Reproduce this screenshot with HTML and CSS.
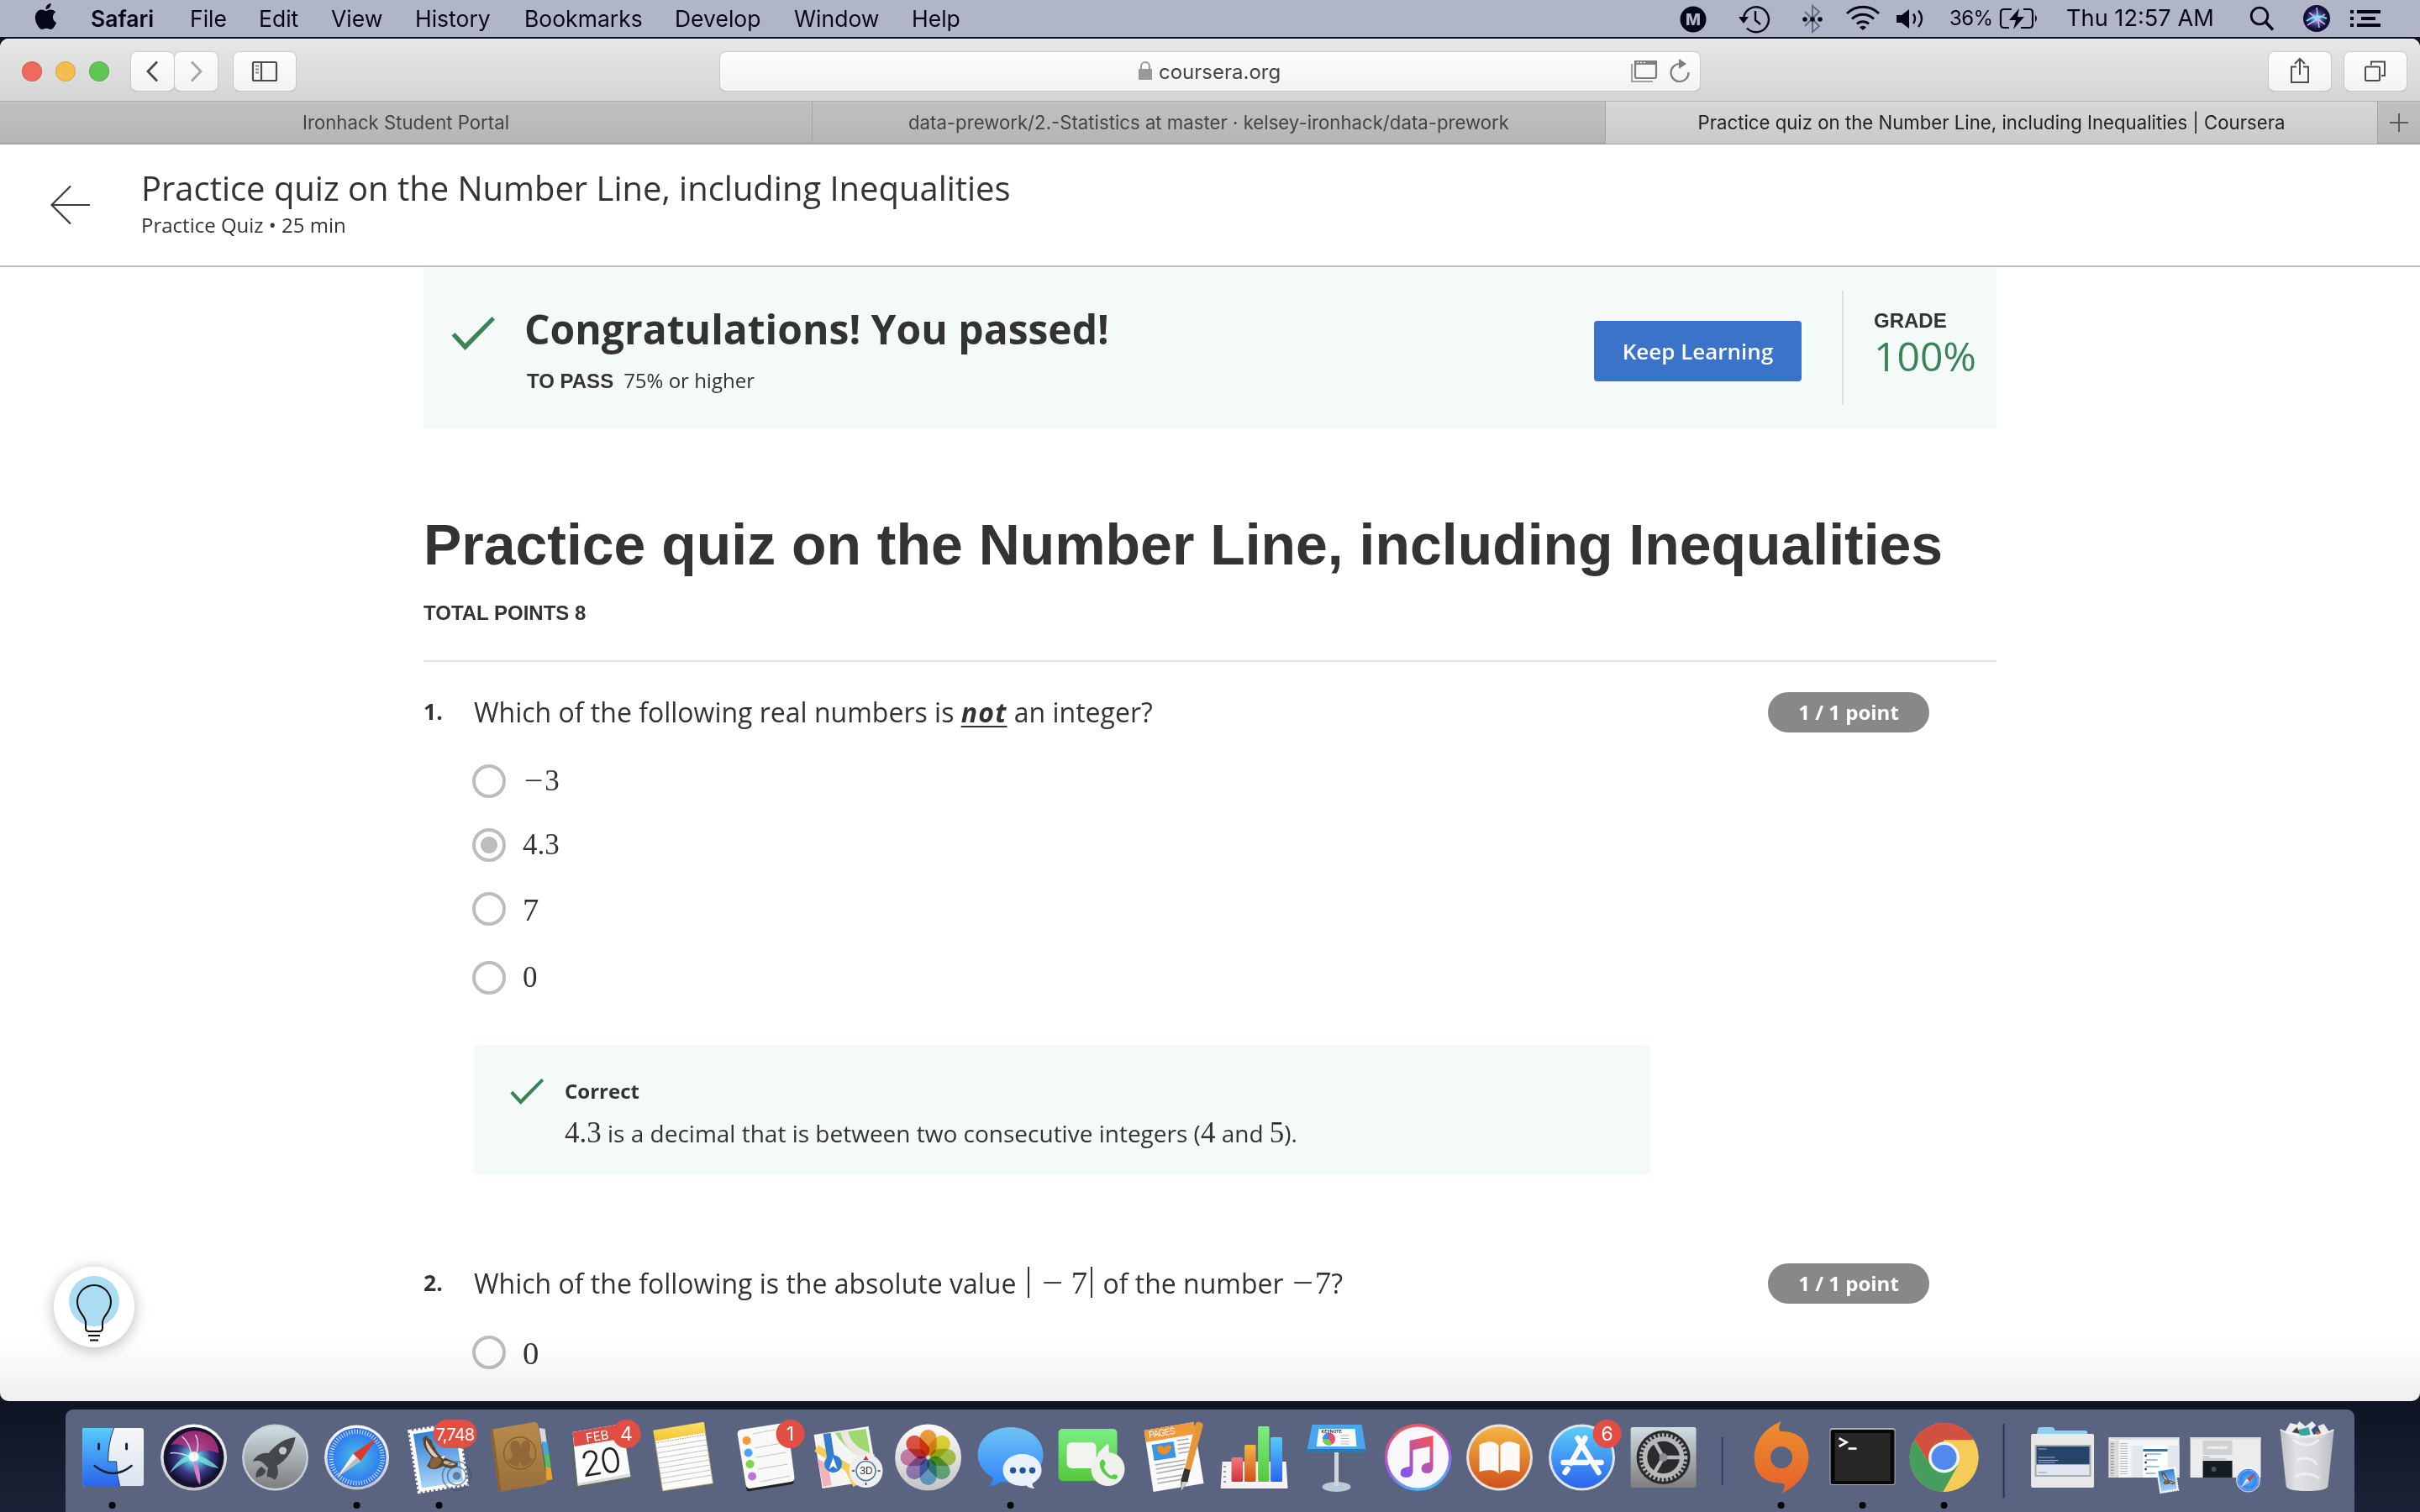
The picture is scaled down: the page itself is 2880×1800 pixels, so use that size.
FILE: index.html
```html
<!DOCTYPE html>
<html lang="en">
<head>
<meta charset="utf-8">
<title>Practice quiz on the Number Line, including Inequalities | Coursera</title>
<link rel="stylesheet" href="styles.css">
</head>
<body>
<svg class="defs" width="0" height="0" aria-hidden="true">
  <defs>
    <linearGradient id="gBlue" x1="0" y1="0" x2="0" y2="1"><stop offset="0" stop-color="#59ccfa"/><stop offset="1" stop-color="#2a63ec"/></linearGradient>
    <linearGradient id="gWhite" x1="0" y1="0" x2="0" y2="1"><stop offset="0" stop-color="#f7f7f8"/><stop offset="1" stop-color="#dbe4ef"/></linearGradient>
    <radialGradient id="gSiri"><stop offset="0" stop-color="#e8ffff"/><stop offset=".25" stop-color="#59b9d8"/><stop offset=".6" stop-color="#3a3b86"/><stop offset="1" stop-color="#120d2c"/></radialGradient>
    <linearGradient id="gRing" x1="0" y1="0" x2="0" y2="1"><stop offset="0" stop-color="#fdfdfd"/><stop offset="1" stop-color="#c3c3c6"/></linearGradient>
    <linearGradient id="gPad" x1="0" y1="0" x2="0" y2="1"><stop offset="0" stop-color="#cfdde3"/><stop offset="1" stop-color="#7e7e7e"/></linearGradient>
    <radialGradient id="gSafari"><stop offset="0" stop-color="#4cbfe4"/><stop offset="1" stop-color="#2a6ff0"/></radialGradient>
    <linearGradient id="gSky" x1="0" y1="0" x2="0" y2="1"><stop offset="0" stop-color="#3380d6"/><stop offset="1" stop-color="#a9d3f5"/></linearGradient>
    <linearGradient id="gBrown" x1="0" y1="0" x2="0" y2="1"><stop offset="0" stop-color="#b98a4c"/><stop offset="1" stop-color="#98703c"/></linearGradient>
    <linearGradient id="gYellow" x1="0" y1="0" x2="0" y2="1"><stop offset="0" stop-color="#fbe06b"/><stop offset="1" stop-color="#f2c32e"/></linearGradient>
    <linearGradient id="gMsg" x1="0" y1="0" x2="0" y2="1"><stop offset="0" stop-color="#6fc3f6"/><stop offset="1" stop-color="#2f83fa"/></linearGradient>
    <linearGradient id="gGreen" x1="0" y1="0" x2="0" y2="1"><stop offset="0" stop-color="#7bee83"/><stop offset="1" stop-color="#56c83c"/></linearGradient>
    <linearGradient id="gOrange" x1="0" y1="0" x2="0" y2="1"><stop offset="0" stop-color="#f4b741"/><stop offset="1" stop-color="#d0501d"/></linearGradient>
    <linearGradient id="gRed" x1="0" y1="0" x2="0" y2="1"><stop offset="0" stop-color="#f07a7c"/><stop offset="1" stop-color="#cf3340"/></linearGradient>
    <linearGradient id="gTunes" x1=".3" y1="0" x2=".6" y2="1"><stop offset="0" stop-color="#f8594f"/><stop offset=".55" stop-color="#a950ee"/><stop offset="1" stop-color="#45bdf8"/></linearGradient>
    <linearGradient id="gNote" x1=".8" y1="0" x2=".2" y2="1"><stop offset="0" stop-color="#f0545e"/><stop offset="1" stop-color="#8355f2"/></linearGradient>
    <linearGradient id="gOrigin" x1="0" y1="0" x2="0" y2="1"><stop offset="0" stop-color="#ee8f2f"/><stop offset="1" stop-color="#e5602a"/></linearGradient>
    <linearGradient id="gTrash" x1="0" y1="0" x2="1" y2="0"><stop offset="0" stop-color="#c4c6cb"/><stop offset=".3" stop-color="#e9e9ea"/><stop offset=".7" stop-color="#dcdcdd"/><stop offset="1" stop-color="#bfc0c6"/></linearGradient>
    <symbol id="check" viewBox="0 0 54 40"><path d="M1.5 22.5 L5.5 19 L17.5 32 L49.5 0 L53 3.6 L17.5 40 Z" fill="#3d8359"/></symbol>
    <symbol id="compass" viewBox="-41 -41 82 82">
      <circle r="39.5" fill="url(#gRing)"/><circle r="36" fill="url(#gSafari)"/>
      <circle r="31.5" fill="none" stroke="#fff" stroke-width="5.5" stroke-dasharray="1 2.3" opacity=".85"/>
      <path d="M25 -24 L4.5 4.5 L-4.5 -4.5 Z" fill="#dc3a30"/><path d="M-24 24 L4.5 4.5 L-4.5 -4.5 Z" fill="#f0f2f4"/><path d="M-24 24 L4.5 4.5 L0 0 Z" fill="#b9bec4"/>
    </symbol>
    <symbol id="stamp" viewBox="-42 -45 84 90">
      <g transform="rotate(-9)">
        <rect x="-29" y="-36" width="58" height="73" fill="#fff" stroke="#fff" stroke-width="4" stroke-dasharray="3 2.2"/>
        <rect x="-25" y="-32" width="50" height="65" fill="url(#gSky)"/>
        <path d="M-14 -26 L-10 -28 L-8 -24 L-5 -22 L-4 -16 L-2 -12 C-1 -6 2 -2 6 1 C11 4 15 5 18 9 L22 10 L21 14 C16 17 9 15 4 11 C0 13 -6 14 -11 12 L-15 8 C-12 4 -9 1 -8 -2 C-12 -8 -17 -17 -14 -26 Z" fill="#594530"/>
        <path d="M-11 -23 C-8 -14 -4 -7 0 -1 C-2 0 -5 -1 -7 -4 C-11 -10 -13 -17 -11 -23 Z" fill="#d9cdb5"/>
        <path d="M6 5 C11 6 15 8 19 11 C14 13 9 11 5 8 Z" fill="#c9b894"/>
        <path d="M-7 0 C-3 -2 4 1 3 5 C0 10 -6 13 -11 11 C-12 6 -10 2 -7 0 Z" fill="#8a653c"/>
        <path d="M3 0 l5 -1 -2 4 z" fill="#fff"/>
      </g>
    </symbol>
  </defs>
</svg>

<header class="menubar">
  <nav class="menus">
    <svg class="apple" viewBox="0 0 24 24"><path d="M12.152 6.896c-.948 0-2.415-1.078-3.96-1.04-2.04.027-3.91 1.183-4.961 3.014-2.117 3.675-.546 9.103 1.519 12.09 1.013 1.454 2.208 3.09 3.792 3.039 1.52-.065 2.09-.987 3.935-.987 1.831 0 2.35.987 3.96.948 1.637-.026 2.676-1.48 3.676-2.948 1.156-1.688 1.636-3.325 1.662-3.415-.039-.013-3.182-1.221-3.22-4.857-.026-3.04 2.48-4.494 2.597-4.559-1.429-2.09-3.623-2.324-4.39-2.376-2-.156-3.675 1.09-4.61 1.09zM15.53 3.83c.843-1.012 1.4-2.427 1.245-3.83-1.207.052-2.662.805-3.532 1.818-.78.896-1.454 2.338-1.273 3.714 1.338.104 2.715-.688 3.559-1.701"/></svg>
    <b>Safari</b><span>File</span><span>Edit</span><span>View</span><span>History</span><span>Bookmarks</span><span>Develop</span><span>Window</span><span>Help</span>
  </nav>
  <div class="status">
    <svg width="32" height="44"><circle cx="16" cy="23" r="15.5"/><text x="16" y="30" text-anchor="middle" class="glyph-m">M</text></svg>
    <svg width="38" height="44" fill="none" stroke="#05081a" stroke-width="2.4"><path d="M6 22 A15 15 0 1 1 10 33.5"/><path d="M20 13 V24 L26 29"/><path d="M0 20 H12 L6 28 Z" fill="#05081a" stroke="none"/></svg>
    <svg width="26" height="44" fill="none" stroke="#646a80" stroke-width="2"><path d="M4 14 L21 31 L13 38 V7 L21 14 L4 31"/><g fill="#05081a" stroke="none"><circle cx="4" cy="23" r="2.8"/><circle cx="13" cy="23" r="2.8"/><circle cx="22" cy="23" r="2.8"/></g></svg>
    <svg width="42" height="44" fill="none" stroke="#05081a" stroke-width="3"><path d="M2 16 A27 27 0 0 1 40 16"/><path d="M8 22.5 A18.5 18.5 0 0 1 34 22.5"/><path d="M14 28.5 A10 10 0 0 1 28 28.5"/><path d="M21 36 L17 32.5 A5.5 5.5 0 0 1 25 32.5 Z" fill="#05081a" stroke="none"/></svg>
    <svg width="36" height="44" fill="none" stroke="#05081a" stroke-width="2.4"><path d="M1 18 H7 L16 11 V34 L7 27 H1 Z" fill="#05081a" stroke="none"/><path d="M21 16.5 Q25 22 21 28"/><path d="M27 12.5 Q35 22 27 32"/></svg>
    <span class="pct">36%</span>
    <svg width="48" height="44" fill="none" stroke="#05081a" stroke-width="2.2"><path d="M15 11 H6 Q2 11 2 15 V29 Q2 33 6 33 H12"/><path d="M29 11 H36 Q40 11 40 15 V29 Q40 33 36 33 H26"/><path d="M43 17.5 Q47 22 43 26.5 Z" fill="#05081a" stroke="none"/><path d="M24 10 L12 24 H20 L17 35 L30 20 H22 Z" fill="#05081a" stroke="none"/></svg>
    <span class="clock">Thu 12:57 AM</span>
    <svg width="32" height="44" fill="none" stroke="#05081a" stroke-width="2.8"><circle cx="12" cy="19" r="9.8"/><path d="M19 26 L28 35.5" stroke-width="3.4"/></svg>
    <svg width="34" height="44"><circle cx="17" cy="22" r="16" fill="#10103a"/><circle cx="17" cy="22" r="13" fill="url(#gSiri)"/><path d="M8 15 L27 29 M17 9 L20 33 M6 30 L27 17" stroke="#e6a8f0" stroke-width="1.6"/><path d="M5 25 Q17 16 29 22" stroke="#64f0e8" stroke-width="2" fill="none"/></svg>
    <svg width="38" height="44"><path d="M0 12h4v4h-4zM8 12h28v4H8zM0 20h4v4h-4zM13 20h17v4H13zM0 28h4v4h-4zM8 28h28v4H8z"/></svg>
  </div>
</header>

<main class="window">
  <div class="toolbar">
    <div class="lights"><i class="red"></i><i class="yellow"></i><i class="green"></i></div>
    <div class="nav-pair">
      <button class="btn"><svg width="51" height="46"><path d="M31 11.5 L20 23 L31 34.5" fill="none" stroke="#4c4c4c" stroke-width="2.8"/></svg></button>
      <button class="btn"><svg width="51" height="46"><path d="M20 11.5 L31 23 L20 34.5" fill="none" stroke="#a5a5a5" stroke-width="2.8"/></svg></button>
    </div>
    <button class="btn wide"><svg width="74" height="46" fill="none" stroke="#4c4c4c" stroke-width="2.2"><rect x="23" y="12" width="28" height="22" rx="1.5"/><path d="M33 12 V34"/><path d="M26 16.5h4M26 20.5h4M26 24.5h4" stroke="#888"/></svg></button>
    <div class="address">
      <svg class="lock" width="18" height="24"><rect x="1" y="10" width="16" height="13" fill="#999"/><path d="M4 11 V7 a5 5 0 0 1 10 0 V11" fill="none" stroke="#999" stroke-width="2"/></svg>
      <span>coursera.org</span>
      <svg class="addr-icons" width="74" height="46" fill="none"><path d="M2 14 V35 H27" stroke="#a0a0a0" stroke-width="2"/><rect x="6" y="11" width="25" height="20" rx="2" stroke="#7d7d7d" stroke-width="2.2"/><path d="M5 10h27v5H5z" fill="#7d7d7d"/><path d="M8 12.5h2M12 12.5h2M16 12.5h2" stroke="#eee" stroke-width="1.6"/><path d="M59 14 A10.5 10.5 0 1 0 69.5 24" stroke="#7d7d7d" stroke-width="2.2"/><path d="M58 8 L67 14 L58 20 Z" fill="#7d7d7d"/></svg>
    </div>
    <button class="btn wide share"><svg width="74" height="46" fill="none" stroke="#4c4c4c" stroke-width="2"><path d="M33 17.5 H27 V36 H47 V17.5 H41"/><path d="M37 27 V8 M31 14 L37 8 L43 14"/></svg></button>
    <button class="btn wide"><svg width="74" height="46" fill="none" stroke="#4c4c4c" stroke-width="2"><rect x="25" y="17.5" width="17" height="16.5" rx="1.5"/><path d="M32 15.5 V11.5 H48 V28 H44"/></svg></button>
  </div>
  <div class="tabs">
    <div class="tab">Ironhack Student Portal</div>
    <div class="tab">data-prework/2.-Statistics at master · kelsey-ironhack/data-prework</div>
    <div class="tab active">Practice quiz on the Number Line, including Inequalities | Coursera</div>
    <div class="newtab"><svg width="24" height="24"><path d="M12 1 V23 M1 12 H23" stroke="#5a5a5a" stroke-width="2"/></svg></div>
  </div>

  <div class="quiz-header">
    <svg class="back" width="48" height="48" fill="none" stroke="#3a3a42" stroke-width="2.2"><path d="M47 24 H2 M24 1.5 L1.5 24 L24 46.5"/></svg>
    <div>
      <div class="quiz-name">Practice quiz on the Number Line, including Inequalities</div>
      <div class="quiz-sub">Practice Quiz • 25 min</div>
    </div>
  </div>

  <div class="content">
    <section class="banner">
      <svg class="banner-check" width="54" height="40"><use href="#check"/></svg>
      <div class="banner-text">
        <h2>Congratulations! You passed!</h2>
        <p><b>TO PASS</b><span>75% or higher</span></p>
      </div>
      <button class="keep">Keep Learning</button>
      <div class="grade"><b>GRADE</b><span>100%</span></div>
    </section>

    <h1>Practice quiz on the Number Line, including Inequalities</h1>
    <div class="total">TOTAL POINTS 8</div>

    <section class="question">
      <div class="q-row">
        <span class="num">1.</span>
        <p class="prompt p1">Which of the following real numbers is <em>not</em> an integer?</p>
        <span class="pill">1 / 1 point</span>
      </div>
      <ul class="options">
        <li><i class="radio"></i><span class="math"><span class="minus">−</span>3</span></li>
        <li><i class="radio on"></i><span class="math">4.3</span></li>
        <li><i class="radio"></i><span class="math big">7</span></li>
        <li class="last"><i class="radio"></i><span class="math">0</span></li>
      </ul>
      <div class="feedback">
        <svg class="fb-check" width="42" height="31"><use href="#check"/></svg>
        <div>
          <b>Correct</b>
          <p><span class="math">4.3</span> is a decimal that is between two consecutive integers (<span class="math">4</span> and <span class="math">5</span>).</p>
        </div>
      </div>
    </section>

    <section class="question second">
      <div class="q-row">
        <span class="num">2.</span>
        <p class="prompt p2">Which of the following is the absolute value <span class="abs"><span class="math big minus">−</span><span class="math big">7</span></span> of the number <span class="math big minus">−</span><span class="math big">7</span>?</p>
        <span class="pill">1 / 1 point</span>
      </div>
      <ul class="options">
        <li><i class="radio"></i><span class="math big">0</span></li>
      </ul>
    </section>
  </div>

  <div class="fade"></div>
  <div class="hint"><svg width="96" height="96" fill="none" stroke="#0c0c0c" stroke-width="2"><circle cx="48" cy="41" r="30" fill="#aadcf2" stroke="none"/><path d="M38 73 V67 C38 58 28 55 28 42 A20 20 0 0 1 68 42 C68 55 58 58 58 67 V73 Q58 77 54 77 H42 Q38 77 38 73 Z"/><path d="M41 82 H55 M43 87.5 H53"/></svg></div>
</main>

<footer class="dock">
  <svg class="app" viewBox="-48.6 0 97.2 122">
    <rect x="-35.5" y="22" width="73" height="69" rx="3" fill="url(#gWhite)"/>
    <path d="M-32.5 22 H2 Q-5 40 -5 62 H5 Q5 78 9 91 H-32.5 Q-35.5 91 -35.5 88 V25 Q-35.5 22 -32.5 22 Z" fill="url(#gBlue)"/>
    <path d="M2 22 Q-5 40 -5 62 H5 Q5 78 9 91" fill="none" stroke="#23364f" stroke-width="1"/>
    <path d="M-16 41 V47 M17 41 V47" stroke="#16263c" stroke-width="3" stroke-linecap="round"/>
    <path d="M-21 67 Q1 85 23 67" fill="none" stroke="#16263c" stroke-width="2.6" stroke-linecap="round"/>
    <circle cy="114" r="4"/>
  </svg>
  <svg class="app" viewBox="-48.6 0 97.2 122">
    <circle cy="57" r="39.5" fill="url(#gRing)"/><circle cy="57" r="36" fill="#17122f"/>
    <circle cy="57" r="33" fill="url(#gSiri)"/>
    <path d="M-27 42 Q-12 22 8 26 Q28 30 30 52 Q10 44 0 56 Q-8 38 -27 42 Z" fill="#c33580" opacity=".75"/>
    <path d="M-29 76 Q-16 54 0 54 Q16 56 30 70 Q14 68 2 58 Q8 76 8 88 Q0 76 -1 60 Q-14 62 -29 76 Z" fill="#72efe4" opacity=".75"/>
    <path d="M-2 58 Q-4 40 -14 32 M2 56 Q8 40 2 30 M-1 58 Q-18 50 -28 52" stroke="#dff" stroke-width="1.5" fill="none" opacity=".8"/>
    <path d="M0 55 Q10 74 7 90 Q-1 76 0 55Z" fill="#e674c4" opacity=".9"/><circle cy="56" r="6" fill="#fff" opacity=".85"/>
  </svg>
  <svg class="app" viewBox="-48.6 0 97.2 122">
    <circle cy="57" r="39.5" fill="#c6d2d8"/><circle cy="57" r="37" fill="url(#gPad)"/>
    <path d="M24 33 Q6 35 -8 52 Q-20 50 -27 62 Q-18 59 -14 64 L-8 70 Q-10 72 -10 80 Q-4 80 -1 84 Q6 78 2 67 Q20 56 24 33 Z" fill="#45484a"/>
    <circle cx="9" cy="49" r="4.6" fill="#bccacf"/><path d="M-16 68 Q-24 72 -23 81 Q-13 80 -11 73 Z" fill="#45484a"/>
  </svg>
  <svg class="app" viewBox="-48.6 0 97.2 122"><use href="#compass" x="-40" y="17" width="80" height="80"/><circle cy="114" r="4"/></svg>
  <svg class="app" viewBox="-48.6 0 97.2 122">
    <use href="#stamp" x="-43" y="12" width="84" height="90"/>
    <g fill="none" stroke="#36506e" stroke-width="1.6" opacity=".6"><circle cx="21" cy="79" r="17"/><circle cx="21" cy="79" r="11"/><circle cx="21" cy="79" r="4" fill="#36506e"/></g>
    <rect x="-7" y="12" width="52" height="34" rx="17" fill="#e34e42"/><text x="19" y="37" class="badge wide-badge">7,748</text><circle cy="114" r="4"/>
  </svg>
  <svg class="app" viewBox="-48.6 0 97.2 122">
    <path d="M22 22 l7 1 2 16 -6 2z" fill="#d5dadc"/><path d="M25 38 l7 1 2 15 -6 2z" fill="#46a5d9"/><path d="M28 53 l6 1 2 14 -6 2z" fill="#50c553"/><path d="M30 68 l6 1 2 14 -8 2z" fill="#efa02c"/>
    <path d="M-36 24 L16 15 Q20 15 21 19 L31 84 Q31 88 28 89 L-26 98 Z" fill="url(#gBrown)"/><path d="M-36 24 L-26 98 L-23 97.5 L-33 23.5Z" fill="#8b6230"/>
    <circle cx="-1" cy="52" r="19" fill="none" stroke="#86602f" stroke-width="1.4"/>
    <path d="M-16 61 Q-9 58 -10 52 Q-15 43 -10 38 Q-4 35 -1 41 L0 46 L1 41 Q4 35 9 37 Q14 42 10 51 Q9 57 15 60 Q10 66 3 68 L-1 62 L-3 68 Q-11 67 -16 61 Z" fill="#906936"/>
  </svg>
  <svg class="app" viewBox="-48.6 0 97.2 122">
    <path d="M-38 32 L-33 96 L36 85 L34 76 L28 30 Z" fill="#59666c"/>
    <path d="M-35 27 L24 17 L34 80 L-29 91 Z" fill="#dcdcdc"/><path d="M-35 27 L24 17 L33 76 L-29 88 Z" fill="#fbfbfb"/>
    <path d="M-35 27 L24 17 L27 34 L-33 44 Z" fill="#dd4c46"/>
    <text x="-5" y="37" class="cal-mon" transform="rotate(-9 -5 37)">FEB</text><text x="0" y="77" class="cal-day" transform="rotate(-9 0 77)">20</text>
    <circle cx="29" cy="29" r="17" fill="#e34e42"/><text x="29" y="37" class="badge">4</text>
  </svg>
  <svg class="app" viewBox="-48.6 0 97.2 122">
    <path d="M-36 25 L24 15 L35 88 L-25 97 Z" fill="#fcfcfb" stroke="#b79b47" stroke-width=".8"/><path d="M-36 25 L24 15 L26 27.500 L-34 37.500 Z" fill="url(#gYellow)"/>
    <path d="M-34 40 L26 30" stroke="#999" stroke-width="1" stroke-dasharray="1.500 1.500"/>
    <path d="M-33 46 L27 36 M-32 52 L28 42 M-31 58 L29 48 M-30 64 L30 54 M-29 70 L31 60 M-28 76 L32 66 M-27 82 L33 72 M-26 88 L34 78" stroke="#bfc2c6" stroke-width="1"/>
  </svg>
  <svg class="app" viewBox="-48.6 0 97.2 122">
    <path d="M-32 30 L-22 96 Q-21 98 -18 97 L32 89 Q35 88 34 84 Z" fill="#222"/>
    <path d="M-29 24 L22 16 Q26 16 27 20 L35 81 Q35 85 31 86 L-18 94 Q-22 94 -23 90 L-33 29 Q-33 25 -29 24 Z" fill="#f9f9f9"/>
    <path d="M-15 29 L12 24 M-13 46 L20 40 M-11 57 L25 51 M-9 71 L27 65 M-6 86 L30 79" stroke="#c6c6c6" stroke-width="1"/>
    <circle cx="-22" cy="37" r="5" fill="#f19a37"/><circle cx="-20" cy="51.500" r="5" fill="#4aa7ef"/><circle cx="-18" cy="65" r="5" fill="#81d64b"/><circle cx="-15.500" cy="79.500" r="5" fill="#bb75dd"/>
    <circle cx="30" cy="29" r="17" fill="#e34e42"/><text x="30" y="37" class="badge">1</text>
  </svg>
  <svg class="app" viewBox="-48.6 0 97.2 122">
    <path d="M-39 30 L26 20 L37 84 L-29 94 Z" fill="#f5f5f2"/><path d="M-14 28 L23 23 L30 64 Q2 52 -14 28 Z" fill="#9ed873"/>
    <path d="M-3 25 Q0 48 32 58" fill="none" stroke="#ece8df" stroke-width="9"/><path d="M-36 46 L2 70 L12 90" fill="none" stroke="#f7ce55" stroke-width="9"/>
    <path d="M-35 58 L-22 66 L-18 90 L-28 92 Z" fill="#f2b3bc"/><path d="M-28 29 L-19 28 L-14 60 L-23 60 Z" fill="#377cc9"/>
    <circle cx="-16" cy="64.700" r="10.500" fill="#2e7ed6"/><path d="M-16 57 L-11 71 L-16 67.500 L-21 71 Z" fill="#fff"/>
    <circle cx="23" cy="73" r="20" fill="#eceef0"/><circle cx="23" cy="73" r="11.500" fill="#f7f7f7" stroke="#4b7c9f" stroke-width="1.600"/><text x="23" y="77.500" class="map3d">3D</text><path d="M20 60 L23 55 L26 60 Z" fill="#e02b20"/><path d="M6.500 73h3M37 73h3M23 87v3" stroke="#333" stroke-width="1.500"/>
  </svg>
  <svg class="app" viewBox="-48.6 0 97.2 122">
    <circle cy="57" r="39.500" fill="url(#gRing)"/>
    <g transform="translate(0 57)" class="petals">
      <rect x="-10" y="-33" width="20" height="31" rx="10" fill="#f2a13c"/>
      <rect x="-10" y="-33" width="20" height="31" rx="10" fill="#ecd93a" transform="rotate(45)"/>
      <rect x="-10" y="-33" width="20" height="31" rx="10" fill="#b6d651" transform="rotate(90)"/>
      <rect x="-10" y="-33" width="20" height="31" rx="10" fill="#74c08a" transform="rotate(135)"/>
      <rect x="-10" y="-33" width="20" height="31" rx="10" fill="#78b6e8" transform="rotate(180)"/>
      <rect x="-10" y="-33" width="20" height="31" rx="10" fill="#a58ecf" transform="rotate(225)"/>
      <rect x="-10" y="-33" width="20" height="31" rx="10" fill="#d98bb5" transform="rotate(270)"/>
      <rect x="-10" y="-33" width="20" height="31" rx="10" fill="#ea5545" transform="rotate(315)"/>
    </g>
  </svg>
  <svg class="app" viewBox="-48.6 0 97.2 122">
    <path d="M0 21 C22 21 39 35 39 54 C39 73 22 87 0 87 C-4 87 -8 86 -12 86 C-15 89 -20 91 -26 91 C-22 88 -21 84 -21 81 C-32 75 -39 65 -39 54 C-39 35 -22 21 0 21 Z" fill="url(#gMsg)"/>
    <path d="M14 53 C27 53 37 61 37 72 C37 79 33 84 26 88 Q26 92 29 94 Q22 94 19 90.500 C3 93 -9 84 -9 72 C-9 61 1 53 14 53 Z" fill="#e9f2fa"/>
    <g fill="#21559d"><circle cx="3" cy="72.500" r="3.700"/><circle cx="14.500" cy="72.500" r="3.700"/><circle cx="26" cy="72.500" r="3.700"/></g><circle cy="114" r="4"/>
  </svg>
  <svg class="app" viewBox="-48.6 0 97.2 122">
    <rect x="-40" y="23" width="70" height="62" rx="5" fill="url(#gGreen)"/><rect x="-30" y="39" width="35" height="31" rx="6" fill="#f3f3f0"/><path d="M7 52 L18 41 Q20 41 20 43 V66 L7 58 Z" fill="#f3f3f0"/>
    <circle cx="19" cy="71" r="20" fill="#eef0ec"/><path d="M11 60 Q14 58 16 64 Q15 68 14 68 Q16 75 23 79 Q25 76 30 78 Q32 81 28 83 Q20 84 12 74 Q7 65 11 60 Z" fill="#5ccc48"/>
  </svg>
  <svg class="app" viewBox="-48.6 0 97.2 122">
    <path d="M-35 25 L24 15 L36 88 L-24 98 Z" fill="#fafafa"/><path d="M-35 25 L24 15 L26.500 29 L-33 39 Z" fill="#f09a3c"/><text x="-29" y="34" class="pages" transform="rotate(-9 -29 34)">PAGES</text>
    <path d="M-26 42 L0 38 L3 57 L-23 61 Z" fill="#3a95e6"/><path d="M-20 45 Q-13 40 -12 46 Q-8 40 -2 44 Q-5 54 -12 54 Q-18 53 -20 45 Z" fill="#ee8d21"/>
    <path d="M4 37 L18 35 M5 42 L19 40 M5 47 L19 45 M6 52 L19 50 M-22 66 L14 60 M-21 71 L14 65 M-20 76 L12 70 M-20 83 L10 78 M-19 88 L10 83" stroke="#aaa" stroke-width="1.400"/>
    <path d="M31 15 Q36 16 35 20 L20 74 L13 72 L26 18 Q27 14 31 15 Z" fill="#e8963a"/><path d="M20 72 L17 86 L9 97 L9 84 L13 70 Z" fill="#333"/><path d="M17 86 L9 97 L10 86 Z" fill="#ccc"/>
  </svg>
  <svg class="app" viewBox="-48.6 0 97.2 122">
    <path d="M-39 62 H37 L39 94 H-41 Z" fill="#f4f4f4"/><path d="M-36 67v24" stroke="#999" stroke-width="3" stroke-dasharray="2 4"/>
    <rect x="-28" y="57" width="13.500" height="29" rx="1.500" fill="url(#gRed)"/><rect x="-12.500" y="42" width="13.500" height="44" rx="1.500" fill="url(#gOrange)"/><rect x="3.500" y="20" width="13.500" height="66" rx="1.500" fill="url(#gGreen)"/><rect x="18.500" y="33" width="14" height="53" rx="1.500" fill="url(#gBlue)"/>
  </svg>
  <svg class="app" viewBox="-48.6 0 97.2 122">
    <ellipse cy="92" rx="17" ry="6" fill="#b9cad9"/><rect x="-2.500" y="50" width="5" height="41" fill="#cfd7df"/>
    <path d="M-29 18 H30 L35 48 V51 H-35 V48 Z" fill="#49a5ee"/><path d="M-35 47 H35 V51 H-35 Z" fill="#2f77ad"/><path d="M-21 23 H22 L24 44 H-24 Z" fill="#fbfbfb"/><text x="-18" y="27.500" class="keynote">KEYNOTE</text>
    <circle cx="-9" cy="35" r="7.500" fill="#ea4a6e"/><path d="M-9 35 V27.500 A7.500 7.500 0 0 0 -16.500 35 Z" fill="#3a8fe0"/><path d="M-9 35 H-16.500 A7.500 7.500 0 0 0 -5 41.500 Z" fill="#6ccf53"/><path d="M5 31h10M5 34.500h10M5 38h10M5 41h10" stroke="#bbb" stroke-width="1.200"/>
  </svg>
  <svg class="app" viewBox="-48.6 0 97.2 122">
    <circle cy="57" r="40" fill="url(#gTunes)"/><circle cy="57" r="36.500" fill="#f8f7fa"/>
    <path d="M-10 37 L18 31 V68 Q18 76 11 76 Q4 76 4 70 Q4 64 14 63 V44 L-6 48 V73 Q-6 81 -14 81 Q-21 81 -21 75 Q-21 69 -10 68 Z" fill="url(#gNote)"/>
  </svg>
  <svg class="app" viewBox="-48.6 0 97.2 122">
    <circle cy="57" r="39.500" fill="#e8e3df"/><circle cy="57" r="36.500" fill="url(#gOrange)"/>
    <path d="M0 77 Q-6 69 -24 74 V42 Q-8 34 -1 43 V77 Z M0 77 Q6 69 24 74 V42 Q8 34 1 43 V77 Z" fill="#fbfaf8"/>
  </svg>
  <svg class="app" viewBox="-48.6 0 97.2 122">
    <circle cy="57" r="39.500" fill="#dfe3ea"/><circle cy="57" r="36.500" fill="url(#gBlue)"/>
    <path d="M4 34 L-13 64 M-17 71 L-20 75 M-5 34 L20 75 M-22 63 H6 M17 63 H23" stroke="#fafafa" stroke-width="6.500" stroke-linecap="round"/>
    <circle cx="30" cy="29" r="17" fill="#e34e42"/><text x="30" y="37" class="badge">6</text>
  </svg>
  <svg class="app" viewBox="-48.6 0 97.2 122">
    <rect x="-39" y="21" width="78" height="72" rx="2.500" fill="url(#gPad)"/><circle cy="57" r="32" fill="#2a2b2e"/>
    <circle cy="57" r="26.500" fill="none" stroke="#b3b3b3" stroke-width="4.500" stroke-dasharray="2.600 2.500"/><circle cy="57" r="22" fill="none" stroke="#b8b8b8" stroke-width="5.500"/>
    <path d="M0 57 H22 M0 57 L-11 38 M0 57 L-11 76" stroke="#b8b8b8" stroke-width="4.500"/><circle cy="57" r="5" fill="#8c8f92"/>
  </svg>
  <svg class="sep" viewBox="0 0 44 122"><path d="M22 32 V90" stroke="#333c5c" stroke-width="2"/></svg>
  <svg class="app" viewBox="-48.6 0 97.2 122">
    <path d="M0 14 Q-4 22 -1 26 Q31 25 33 57 Q32 84 1 100 Q6 92 3 88 Q-31 88 -32 57 Q-31 28 0 14 Z M0.500 44 A13 13 0 1 0 0.500 70 A13 13 0 1 0 0.500 44 Z" fill="url(#gOrigin)" fill-rule="evenodd"/><circle cy="114" r="4"/>
  </svg>
  <svg class="app" viewBox="-48.6 0 97.2 122">
    <rect x="-39" y="22" width="78" height="68" rx="3" fill="#a9b2b5"/><rect x="-38" y="24" width="76" height="65" rx="2" fill="#070707"/><rect x="-33" y="28" width="66" height="57" fill="#272727"/>
    <path d="M-28 34 L-19 39 L-28 44" fill="none" stroke="#fff" stroke-width="2.600"/><path d="M-17 46.500 H-7" stroke="#fff" stroke-width="2.600"/><circle cy="114" r="4"/>
  </svg>
  <svg class="app" viewBox="-48.6 0 97.2 122">
    <g transform="translate(0 57)"><circle r="41" fill="#f6cb57"/>
    <path d="M-35.500 -20.500 A41 41 0 0 1 35.500 -20.500 H0 L-16 9 Z" fill="#d2503f"/>
    <path d="M-35.500 -20.500 A41 41 0 0 0 -1 41 L17 9 L0 12 L-16 9 Z" fill="#479d5c"/><path d="M17 9 L-1 41 A41 41 0 0 0 35.500 -20.500 H0 Z" fill="#f6cb57"/>
    <circle r="18.500" fill="#f3f4f4"/><circle r="15" fill="#5289ec"/></g><circle cy="114" r="4"/>
  </svg>
  <svg class="sep" viewBox="0 0 44 122"><path d="M22 16 V106" stroke="#2b3356" stroke-width="2"/></svg>
  <svg class="app" viewBox="-48.6 0 97.2 122">
    <path d="M-31 30 L-29 22 Q-28 21 -26 21 H-12 Q-10 21 -9 25 H28 Q30 26 30 30 Z" fill="#8fcff5"/><rect x="-37.500" y="29" width="75" height="64" rx="2" fill="#e8e8e8"/><rect x="-33" y="42" width="67" height="38" fill="#a9adb2"/><rect x="-31" y="44" width="63" height="21" fill="#27446a"/><rect x="-31" y="66" width="63" height="12" fill="#dfe6f1"/>
    <path d="M-29 47h10M-29 57h20M-29 60.500h24M-29 63h20" stroke="#9fb2c8" stroke-width="1"/><path d="M-29 75h10" stroke="#7f9dc4" stroke-width="1"/>
  </svg>
  <svg class="app" viewBox="-48.6 0 97.2 122">
    <rect x="-42" y="33" width="84" height="48" fill="#f3f5f6"/><rect x="-42" y="33" width="84" height="3" fill="#ddd"/><rect x="-42" y="37" width="12" height="44" fill="#dadada"/><path d="M-38 40v39" stroke="#999" stroke-width="4" stroke-dasharray="1.500 2"/><path d="M-24 40v39" stroke="#b5b5b5" stroke-width="9" stroke-dasharray="1 2"/><rect x="-15" y="43" width="57" height="38" fill="#e3e8ec"/><rect x="-1" y="43" width="29" height="38" fill="#fff"/><rect x="-1" y="47" width="29" height="3" fill="#2e75b0"/><path d="M2 53h18M2 60h14M2 68h16M2 76h12" stroke="#7fb0d8" stroke-width="1.500"/><path d="M1 55h2M1 63h2M1 71h2" stroke="#111" stroke-width="2.500"/>
    <use href="#stamp" x="11" y="67" width="34" height="34"/>
  </svg>
  <svg class="app" viewBox="-48.6 0 97.2 122">
    <rect x="-42" y="33" width="84" height="48" fill="#ebecee"/><rect x="-42" y="33" width="84" height="2.500" fill="#ddd"/><rect x="-27" y="37" width="35" height="17" fill="#cfd1d3"/><text x="-9.500" y="47" class="remember">remember</text><path d="M-27 56.500h8M-27 59h28" stroke="#aaa" stroke-width="1"/><rect x="-27" y="61" width="35" height="20" fill="#141c22"/><circle cx="-14" cy="71" r="3" fill="#3d5560"/>
    <use href="#compass" x="12" y="69" width="30" height="30"/>
  </svg>
  <svg class="app" viewBox="-48.6 0 97.2 122">
    <path d="M-26 26 L-20 16 L-12 18 L-9 14 L-2 20 L6 14 L12 20 L20 17 L26 26 L20 34 H-20 Z" fill="#ececec"/><path d="M-18 27l6 -6 4 8z" fill="#444"/><path d="M-10 24l12 -3 2 9 -12 2z" fill="#38a59c"/><path d="M5 24l7 -6 4 9 -8 3z" fill="#314d8c"/><path d="M10 26l7 1 -4 6z" fill="#c86a3a"/>
    <path d="M-32 24 Q0 40 32 24 L25 91 Q24 97 0 97 Q-24 97 -25 91 Z" fill="url(#gTrash)" opacity=".95"/><path d="M-32 24 Q0 40 32 24" fill="none" stroke="#f5f5f5" stroke-width="1.500"/><path d="M-17 36 Q0 48 14 36 M-12 60 Q4 54 12 66 M-14 80 Q0 72 15 82" fill="none" stroke="#f6f6f6" stroke-width="3" opacity=".7"/>
  </svg>
</footer>
</body>
</html>
```
FILE: styles.css
```css
* { box-sizing: border-box; }
body {
  margin: 0;
  width: 2880px;
  height: 1800px;
  overflow: hidden;
  position: relative;
  display: flex;
  flex-direction: column;
  background: linear-gradient(#0b1228 0, #0f1524 1680px, #1a2338 1800px);
  font-family: "Open Sans", "Noto Sans", sans-serif;
  color: #333;
}
.defs { position: absolute; }
svg { display: block; flex: none; }
h1, h2, p, ul { margin: 0; padding: 0; }
button { font: inherit; border: 0; padding: 0; }

/* menu bar */
.menubar {
  height: 44px;
  flex: none;
  background: #b0b6c8;
  display: flex;
  justify-content: space-between;
  font: 26.5px/44px Inter, sans-serif;
  color: #05081a;
  fill: #05081a;
}
.menus {
  display: grid;
  grid-template-columns: 69px 118px 82px 86px 100px 130px 179px 142px 140px 80px;
  padding-left: 39px;
  white-space: nowrap;
}
.menus b { font-weight: 600; }
.apple { width: 31px; height: 31px; margin-top: 4px; }
.status {
  display: grid;
  grid-template-columns: 70px 75px 52px 60px 64px 59px 80px 218px 63px 57px 83px;
  white-space: nowrap;
}
.glyph-m { font: 800 19px Inter, sans-serif; fill: #b0b6c8; }
.pct { font-size: 24px; letter-spacing: -.6px; }
.clock { font-size: 27.2px; }

/* browser window */
.window {
  margin-top: 2px;
  height: 1622px;
  flex: none;
  position: relative;
  overflow: hidden;
  border-radius: 10px;
  background: #fff;
}
.toolbar {
  height: 75px;
  display: flex;
  align-items: flex-start;
  padding: 15px 16px 0 26px;
  background: linear-gradient(#e7e7e7, #d4d4d4);
  border-top: 1px solid #f5f5f5;
  border-bottom: 1px solid #aeaeae;
}
.lights { display: flex; gap: 16px; padding-top: 11px; }
.lights i { width: 24px; height: 24px; border-radius: 50%; border: 1px solid rgba(0,0,0,.12); }
.red { background: #ee6a5e; }
.yellow { background: #f5bd4f; }
.green { background: #61c554; }
.nav-pair { display: flex; gap: 1px; margin-left: 26px; }
.btn {
  width: 51px;
  height: 46px;
  border-radius: 7px;
  background: linear-gradient(#fdfdfd, #f2f2f2);
  box-shadow: 0 0 0 1px #cacaca, 0 1px 1px #8f8f8f;
}
.wide { width: 74px; }
.nav-pair + .wide { margin-left: 19px; }
.address {
  width: 1166px;
  height: 46px;
  margin-left: 505px;
  display: flex;
  align-items: center;
  position: relative;
  padding-left: 497px;
  gap: 7px;
  border-radius: 7px;
  background: linear-gradient(#fdfdfd, #f2f2f2);
  box-shadow: 0 0 0 1px #cacaca, 0 1px 1px #8f8f8f;
  font: 24px/46px Inter, sans-serif;
  color: #444;
}
.address span { padding-top: 1px; }
.lock { margin-top: -2px; }
.addr-icons { margin-left: auto; margin-right: 9px; }
.share { margin-left: auto; margin-right: 16px; }
.tabs {
  height: 51px;
  display: grid;
  grid-template-columns: 967px 944px 919px 50px;
  background: linear-gradient(#c1c1c1, #b5b5b5);
  border-bottom: 2px solid #a3a3a3;
  font: 22.2px/50px Inter, sans-serif;
  color: #444;
}
.tab { text-align: center; border-right: 1px solid #a4a4a4; white-space: nowrap; }
.active { background: linear-gradient(#d7d7d7, #cacaca); color: #222; }
.newtab { display: grid; place-items: center; }

/* quiz header */
.quiz-header {
  height: 146px;
  padding: 28px 0 0 60px;
  display: flex;
  gap: 60px;
  border-bottom: 2px solid #bdbdbd;
}
.back { margin-top: 20px; }
.quiz-name { font-size: 39.95px; line-height: 48px; }
.quiz-sub { font-size: 24px; line-height: 32px; margin-top: 4px; }

.content { width: 1872px; margin: 0 auto; }
.banner {
  height: 192px;
  background: #f4faf8;
  display: flex;
  padding-left: 32px;
}
.banner-check { margin-top: 59px; }
.banner-text { margin: 44px 0 0 34px; width: 1273px; }
.banner h2 { font-size: 48px; line-height: 60px; font-weight: 700; }
.banner p { font-size: 24px; line-height: 32px; margin: 15px 0 0 3px; }
.banner b { font-family: "Liberation Sans", Arial, sans-serif; margin-right: 12px; }
.keep {
  width: 247px;
  height: 72px;
  margin-top: 64px;
  border-radius: 4px;
  background: #3a73c8;
  color: #fff;
  font-size: 26px;
  font-weight: 600;
}
.grade {
  margin: 28px 0 0 48px;
  height: 136px;
  padding: 22px 0 0 36px;
  border-left: 2px solid #dedede;
  display: flex;
  flex-direction: column;
}
.grade b { font-size: 24px; line-height: 28px; margin: 0; }
.grade span { font-size: 48px; line-height: 56px; color: #3d8359; }

h1 {
  margin-top: 98px;
  font: bold 67.95px/80px "Liberation Sans", Arial, sans-serif;
  white-space: nowrap;
}
.total {
  margin-top: 26px;
  height: 74px;
  font: bold 24px/32px "Liberation Sans", Arial, sans-serif;
  border-bottom: 2px solid #e1e1e1;
}

.question { padding-top: 36px; }
.second { padding-top: 106px; }
.q-row { display: grid; grid-template-columns: 60px 1540px 192px; line-height: 48px; }
.num { font-size: 26.5px; font-weight: 700; line-height: 46px; }
.prompt { font-size: 32px; white-space: nowrap; }
.prompt em { font-weight: 700; letter-spacing: 1.2px; text-decoration: underline; text-decoration-thickness: 2px; text-underline-offset: 4px; }
.pill {
  height: 48px;
  border-radius: 24px;
  background: #888;
  color: #fff;
  font-size: 24px;
  line-height: 47px;
  font-weight: 700;
  text-align: center;
}
.options { list-style: none; padding: 38px 0 0 58px; display: flex; flex-direction: column; gap: 36px; }
.options li { display: flex; gap: 20px; height: 40px; line-height: 39px; }
.options .last { margin-top: 6px; }
.radio { width: 40px; height: 40px; border-radius: 50%; border: 4px solid #bdbdbd; flex: none; }
.on { background: radial-gradient(circle, #bdbdbd 9.5px, transparent 10.5px); }
.math { font-family: "Liberation Serif", "Times New Roman", serif; font-size: 35px; }
.big { font-size: 38.7px; line-height: 42px; }
.minus { display: inline-block; width: .75em; text-align: center; transform: scaleX(1.15); }
.prompt .math, .feedback .math { line-height: 1; }
.abs {
  display: inline-flex;
  align-items: baseline;
  gap: 8px;
  height: 37px;
  line-height: 36px;
  padding: 0 4px 0 13px;
  margin: 0 4px 0 5px;
  border: solid #333;
  border-width: 0 2px;
}
.feedback {
  margin: 60px 0 0 60px;
  width: 1400px;
  height: 154px;
  background: #f4faf8;
  display: flex;
  gap: 24px;
  padding: 39px 0 0 42px;
}
.fb-check { margin-top: 1px; }
.feedback b { display: block; font-size: 24px; line-height: 32px; }
.feedback p { font-size: 28px; line-height: 40px; margin-top: 14px; white-space: nowrap; }

/* overlays at the bottom of the window */
.fade {
  position: absolute;
  left: 0;
  right: 0;
  bottom: 0;
  height: 76px;
  background: linear-gradient(rgba(0,0,0,0), rgba(0,0,0,.062));
}
.hint {
  position: absolute;
  left: 64px;
  top: 1462px;
  width: 96px;
  height: 96px;
  border-radius: 50%;
  background: #fff;
  box-shadow: 0 3px 18px rgba(0,0,0,.28);
}

/* dock */
.dock {
  width: 2724px;
  height: 122px;
  margin: 10px 0 0 78px;
  flex: none;
  display: flex;
  padding-left: 7px;
  border-radius: 9px 9px 0 0;
  background: #5a6480;
}
.app { width: 97.15px; height: 122px; }
.sep { width: 43.3px; height: 122px; }
.badge { font: 23px Inter, sans-serif; fill: #fff; }
.wide-badge { font-size: 20px; letter-spacing: -.8px; }
.badge, .cal-mon, .cal-day, .map3d, .remember { text-anchor: middle; }
.cal-mon { font: 15px Inter, sans-serif; fill: #fff; }
.cal-day { font: 300 41px Inter, sans-serif; fill: #222; letter-spacing: -2px; }
.map3d { font: 12px Inter, sans-serif; fill: #333; letter-spacing: -.5px; }
.pages { font: 11px Inter, sans-serif; fill: #fff; letter-spacing: -.8px; }
.keynote { font: 700 5px Inter, sans-serif; fill: #333; }
.remember { font: 700 5px Inter, sans-serif; fill: #fff; }
.petals rect { mix-blend-mode: multiply; }
```
